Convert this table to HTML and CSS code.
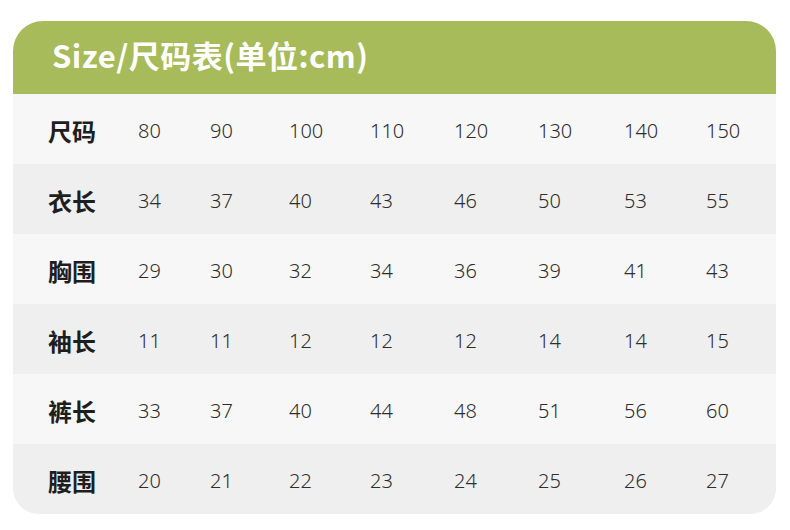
FILE: index.html
```html
<!DOCTYPE html>
<html lang="zh">
<head>
<meta charset="utf-8">
<link rel="stylesheet" href="styles.css">
</head>
<body>
<div class="card">
  <div class="head">Size/尺码表(单位:cm)</div>
  <div class="row odd"><span class="lbl">尺码</span><span>80</span><span>90</span><span>100</span><span>110</span><span>120</span><span>130</span><span>140</span><span>150</span></div>
  <div class="row even"><span class="lbl">衣长</span><span>34</span><span>37</span><span>40</span><span>43</span><span>46</span><span>50</span><span>53</span><span>55</span></div>
  <div class="row odd"><span class="lbl">胸围</span><span>29</span><span>30</span><span>32</span><span>34</span><span>36</span><span>39</span><span>41</span><span>43</span></div>
  <div class="row even"><span class="lbl">袖长</span><span>11</span><span>11</span><span>12</span><span>12</span><span>12</span><span>14</span><span>14</span><span>15</span></div>
  <div class="row odd"><span class="lbl">裤长</span><span>33</span><span>37</span><span>40</span><span>44</span><span>48</span><span>51</span><span>56</span><span>60</span></div>
  <div class="row even"><span class="lbl">腰围</span><span>20</span><span>21</span><span>22</span><span>23</span><span>24</span><span>25</span><span>26</span><span>27</span></div>
</div>
</body>
</html>
```
FILE: styles.css
```css
* { box-sizing: border-box; }
html, body { margin: 0; padding: 0; background: #ffffff; }
body {
  width: 790px;
  height: 530px;
  padding: 21px 14px 0 13px;
  font-family: "Noto Sans", "Noto Sans CJK SC", sans-serif;
}
.card {
  width: 763px;
  border-radius: 30px 30px 26px 26px;
  overflow: hidden;
  background: #f7f7f7;
}
.head {
  height: 73px;
  background: #a8bb5a;
  color: #ffffff;
  font-family: "Noto Sans CJK SC", sans-serif;
  font-weight: 700;
  font-size: 31px;
  line-height: 68px;
  letter-spacing: 0.5px;
  padding-left: 39px;
}
.row {
  height: 70px;
  display: grid;
  grid-template-columns: 90px 72px 79px 81px 84px 84px 86px 82px 1fr;
  align-items: center;
  padding-left: 35px;
  padding-top: 3px;
  color: #2e2e2e;
  font-size: 20px;
  font-weight: 300;
}
.row span { display: block; }
.odd { background: #f7f7f7; }
.even { background: #efefef; }
.lbl {
  font-family: "Noto Sans CJK SC", sans-serif;
  font-weight: 700;
  font-size: 24px;
  color: #1e1e1e;
}
```
